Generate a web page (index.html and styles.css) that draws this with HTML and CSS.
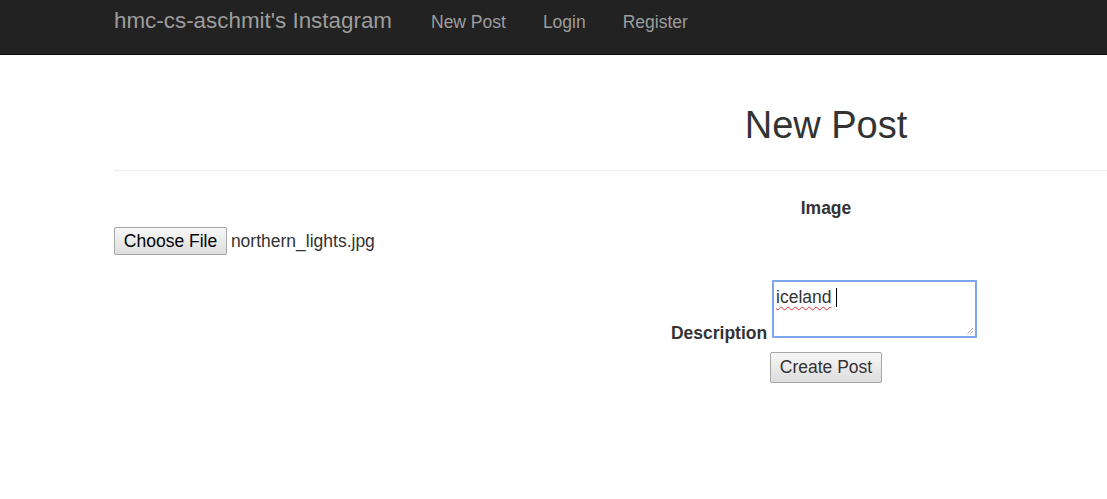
FILE: index.html
```html
<!DOCTYPE html>
<html>
<head>
<meta charset="utf-8">
<title>New Post</title>
<link rel="stylesheet" href="styles.css">
</head>
<body>
<nav class="navbar">
  <a class="brand" href="#">hmc-cs-aschmit's Instagram</a>
  <ul class="nav">
    <li><a href="#">New Post</a></li>
    <li><a href="#">Login</a></li>
    <li><a href="#">Register</a></li>
  </ul>
</nav>
<main class="container">
  <div class="page-header"><h1>New Post</h1></div>
  <form class="post-form">
    <label class="label image-label">Image</label>
    <div class="file-row"><span class="btn file-btn">Choose File</span> <span class="file-name">northern_lights.jpg</span></div>
    <div class="desc-row"><label class="label">Description</label> <div class="textarea"><span class="typed">iceland</span><span class="caret"></span><svg class="grip" width="9" height="9" viewBox="0 0 9 9"><path d="M8 2 L2 8 M8 5 L5 8" stroke="#777" stroke-width="1" stroke-dasharray="1 1" fill="none"/></svg></div></div>
    <div class="submit-row"><span class="btn submit-btn">Create Post</span></div>
  </form>
</main>
</body>
</html>
```
FILE: styles.css
```css
html, body {
  margin: 0;
  overflow-x: hidden;
}
body {
  font-family: "Liberation Sans", Arial, sans-serif;
  font-size: 17.5px;
  line-height: 25px;
  color: #333;
  background: #fff;
}
.navbar {
  box-sizing: border-box;
  height: 55px;
  background: #222;
  border-bottom: 1px solid #080808;
  display: flex;
  align-items: baseline;
  padding: 8px 0 0 114px;
}
.brand {
  font-size: 22.4px;
  line-height: 25px;
  color: #9d9d9d;
  text-decoration: none;
}
.nav {
  list-style: none;
  margin: 0 0 0 39px;
  padding: 0;
  display: flex;
  gap: 37px;
}
.nav a {
  color: #9d9d9d;
  text-decoration: none;
  font-size: 17.5px;
  line-height: 25px;
}
.container {
  box-sizing: content-box;
  width: 1424px;
  margin-left: 99px;
  padding: 0 15px;
  text-align: center;
}
.page-header {
  margin-top: 49px;
  padding-bottom: 24px;
  border-bottom: 1px solid #eee;
}
.page-header h1 {
  margin: 0;
  font-size: 38px;
  line-height: 42px;
  font-weight: normal;
  color: #333;
}
.label {
  font-weight: bold;
}
.image-label {
  display: block;
  margin-top: 25px;
}
.file-row {
  text-align: left;
  margin-top: 6px;
  line-height: 28px;
}
.btn {
  display: inline-block;
  box-sizing: border-box;
  border: 1px solid #a6a6a6;
  border-radius: 2px;
  background: linear-gradient(#f7f7f7, #dddddd);
  color: #000;
  font-size: 17.5px;
  text-align: center;
}
.file-btn {
  width: 113px;
  height: 28px;
  line-height: 26px;
}
.file-name {
  margin-left: -1px;
}
.desc-row {
  margin-top: 25px;
}
.textarea {
  position: relative;
  display: inline-block;
  box-sizing: border-box;
  width: 205px;
  height: 58px;
  margin: 0 4px 1px 0;
  border: 2px solid #7ea6ee;
  border-radius: 1px;
  padding: 3px 2px 1px;
  text-align: left;
  vertical-align: baseline;
  overflow: hidden;
  color: #333;
}
.typed {
  text-decoration: underline wavy #e03030;
  text-decoration-thickness: 1px;
  text-underline-offset: 3px;
}
.caret {
  display: inline-block;
  width: 1px;
  height: 19px;
  background: #000;
  margin-left: 4px;
  vertical-align: -4px;
}
.grip {
  position: absolute;
  right: 1px;
  bottom: 1px;
}
.submit-row {
  margin-top: 6px;
}
.submit-btn {
  width: 112px;
  height: 31px;
  line-height: 29px;
  color: #333;
}
```
